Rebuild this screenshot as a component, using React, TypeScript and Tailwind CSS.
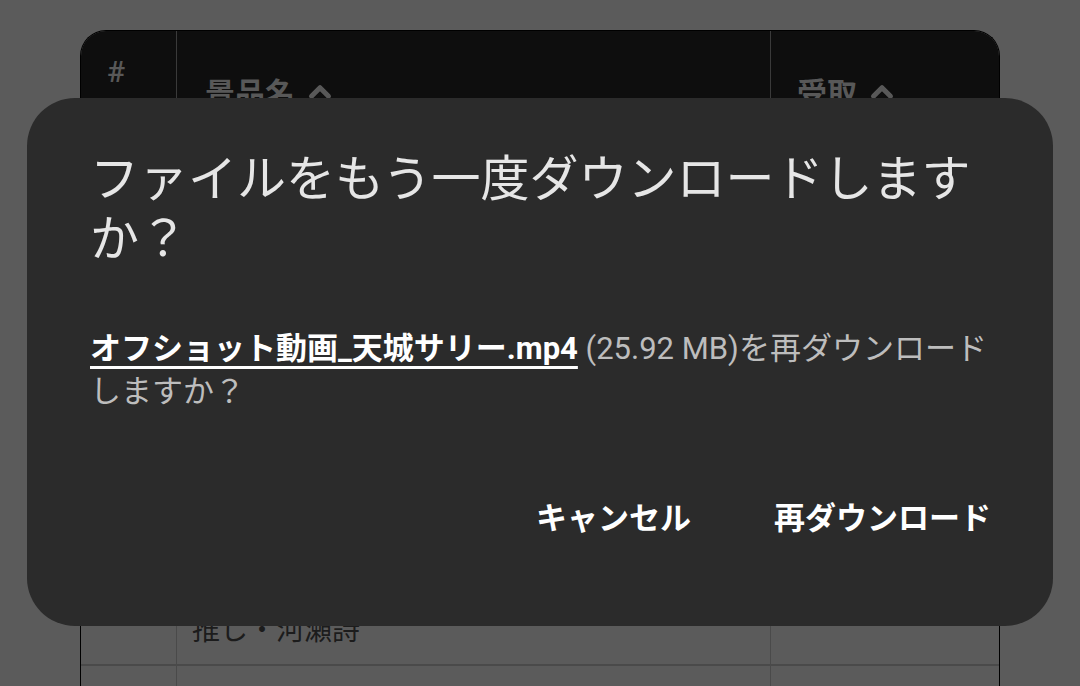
import { ChevronUp } from "lucide-react";

const font = { fontFamily: 'Roboto, "Noto Sans CJK JP", "Noto Sans", sans-serif' };

function PrizeTable() {
  return (
    <div className="w-[920px] ml-[80px] mt-[30px] rounded-t-[26px] overflow-hidden border-x border-t border-black">
      {/* Header */}
      <div className="flex h-[120px] bg-[#0e0e0e] text-[#585858] font-bold">
        <div className="w-[96px] border-r border-[#3a3a3a] pl-[26px] pt-[18px] text-[30px] font-medium">#</div>
        <div className="w-[594px] border-r border-[#3a3a3a] flex items-start gap-2 pl-[28px] pt-[40px] text-[30px]">
          景品名 <ChevronUp className="w-[34px] h-[34px] mt-[4px]" strokeWidth={3.5} />
        </div>
        <div className="flex-1 flex items-start gap-2 pl-[26px] pt-[40px] text-[30px]">
          受取 <ChevronUp className="w-[34px] h-[34px] mt-[4px]" strokeWidth={3.5} />
        </div>
      </div>
      {/* Row */}
      <div className="flex h-[515px] bg-[#5b5b5b] border-b-2 border-[#4a4a4a]">
        <div className="w-[96px] border-r border-[#4a4a4a]" />
        <div className="w-[594px] border-r border-[#4a4a4a] flex flex-col justify-end pl-[15px] pb-[12px] text-[28px] text-[#1c1c1c]">
          推し・河瀬詩
        </div>
        <div className="flex-1" />
      </div>
      <div className="flex h-[60px] bg-[#5b5b5b]">
        <div className="w-[96px] border-r border-[#4a4a4a]" />
        <div className="w-[594px] border-r border-[#4a4a4a]" />
        <div className="flex-1" />
      </div>
    </div>
  );
}

function RedownloadDialog() {
  return (
    <div className="absolute left-[27px] top-[98px] w-[1026px] h-[528px] rounded-[48px] bg-[#2b2b2b] pl-[63px] pr-[62px]">
      <h2 className="pt-[52px] text-[49px] leading-[60px] text-[#e6e6e6] font-normal">
        ファイルをもう一度ダウンロードしますか？
      </h2>
      <p className="mt-[57px] text-[31px] leading-[43px] text-[#bdbdbd]">
        <span className="text-white font-bold underline underline-offset-[7px] decoration-[3px]">オフショット動画_天城サリー.mp4</span>
        {" "}(25.92 MB)を再ダウンロードしますか？
      </p>
      <div className="mt-[83px] flex justify-end gap-[83px] text-[31px] font-bold text-white leading-[46px]">
        <button className="font-bold">キャンセル</button>
        <button className="font-bold">再ダウンロード</button>
      </div>
    </div>
  );
}

export default function App() {
  return (
    <div className="relative w-[1080px] h-[686px] bg-[#5b5b5b] overflow-hidden" style={font}>
      <PrizeTable />
      <RedownloadDialog />
    </div>
  );
}
